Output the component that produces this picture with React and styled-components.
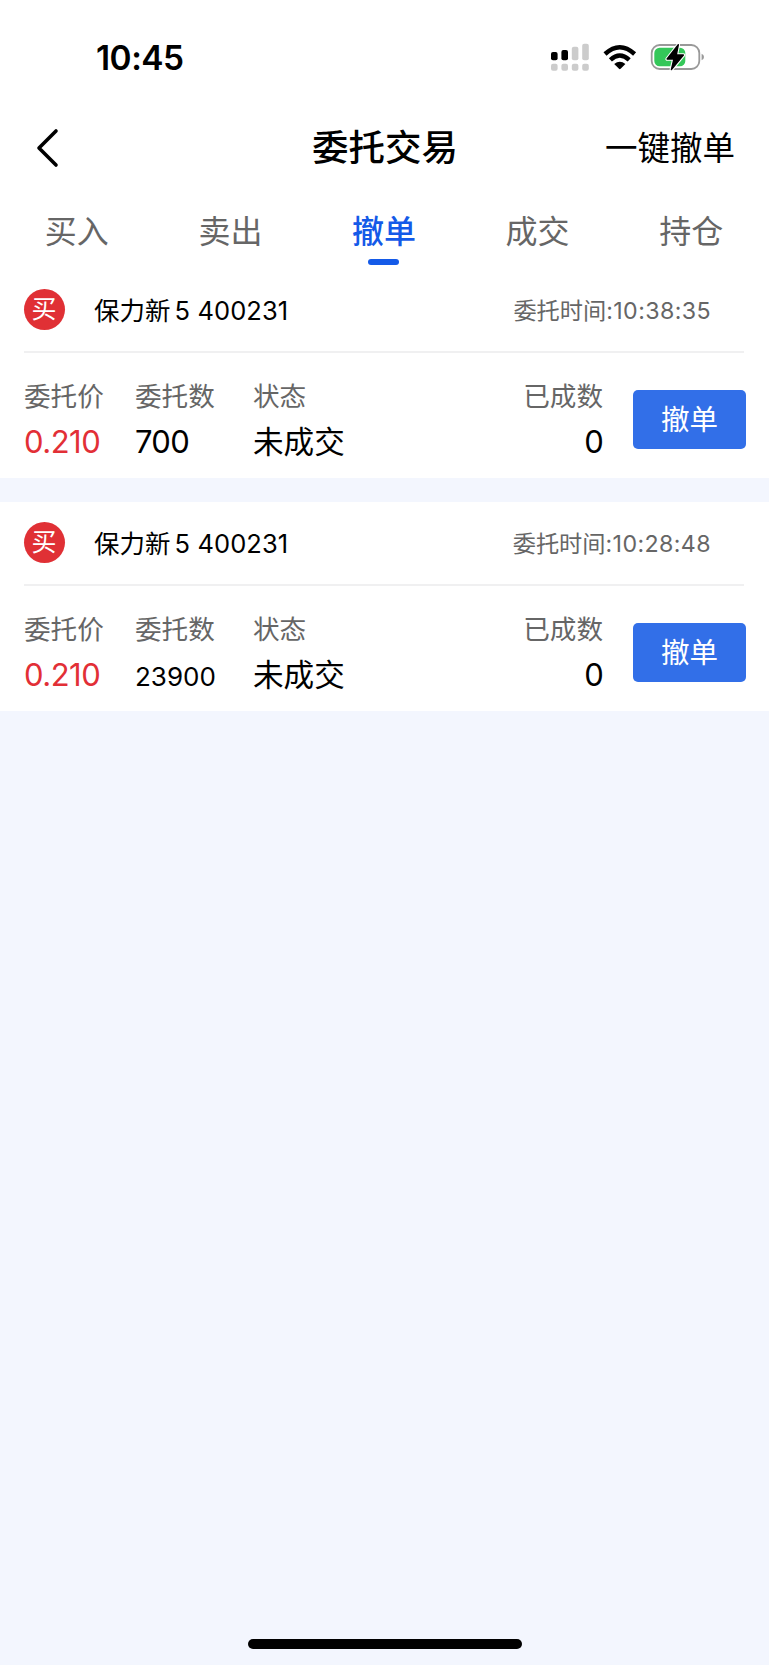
import React from 'react';
import styled, { createGlobalStyle } from 'styled-components';

const GlobalStyle = createGlobalStyle`
  * { box-sizing: border-box; }
  body { margin: 0; background: #f3f6fe; }
`;

const Screen = styled.div`
  width: 769px;
  height: 1665px;
  display: flex;
  flex-direction: column;
  background: #f3f6fe;
  color: #000;
  font-family: Inter, 'Noto Sans CJK SC', sans-serif;
  white-space: nowrap;
`;

const StatusBar = styled.div`
  height: 114px;
  flex: none;
  display: flex;
  align-items: center;
  justify-content: space-between;
  padding: 0 64px 0 96px;
  background: #fff;
`;

const Clock = styled.div`
  padding-top: 2px;
  font-size: 33.4px;
  line-height: 40px;
  font-weight: 600;
  letter-spacing: -0.5px;
`;

const StatusIcons = styled.svg`
  display: block;
  width: 160px;
  height: 40px;
`;

const Header = styled.header`
  height: 68px;
  flex: none;
  display: grid;
  grid-template-columns: 1fr auto 1fr;
  align-items: center;
  padding: 0 34px 0 36px;
  background: #fff;
`;

const BackButton = styled.button`
  width: 24px;
  height: 40px;
  padding: 0;
  border: 0;
  background: none;
  svg { display: block; }
`;

const Title = styled.h1`
  margin: 0 1px 0 0;
  font-size: 36.5px;
  line-height: 44px;
  font-weight: 500;
`;

const HeaderAction = styled.button`
  justify-self: end;
  padding: 2px 0 0;
  border: 0;
  background: none;
  color: #000;
  font: inherit;
  font-size: 32.5px;
  line-height: 44px;
`;

const Tabs = styled.nav`
  height: 90px;
  flex: none;
  display: flex;
  padding-right: 1px;
  background: #fff;
`;

const Tab = styled.div`
  flex: 1;
  display: flex;
  flex-direction: column;
  align-items: center;
  padding-top: 28px;
  font-size: 32px;
  line-height: 44px;
  color: ${(p) => (p.$active ? '#145ae8' : '#666')};
  font-weight: ${(p) => (p.$active ? 500 : 400)};
  &::after {
    content: '';
    width: 31px;
    height: 6px;
    margin-top: 5px;
    border-radius: 3px;
    background: ${(p) => (p.$active ? '#145ae8' : 'transparent')};
  }
`;

const Orders = styled.main`
  display: flex;
  flex-direction: column;
  gap: 24px;
`;

const Order = styled.section`
  height: ${(p) => p.$height}px;
  display: flex;
  flex-direction: column;
  justify-content: flex-end;
  padding: 0 23px 0 24px;
  background: #fff;
`;

const OrderHead = styled.div`
  height: 80px;
  flex: none;
  display: flex;
  align-items: center;
  padding-right: 33px;
  margin-right: 2px;
  border-bottom: 2px solid #f0f0f1;
`;

const Side = styled.div`
  width: 41px;
  height: 41px;
  margin: 0 29px 5px -0.5px;
  border-radius: 50%;
  background: #e03035;
  color: #fff;
  font-size: 25px;
  line-height: 41px;
  text-align: center;
`;

const Stock = styled.div`
  display: flex;
  align-items: baseline;
  gap: 4px;
  margin-bottom: 2px;
  padding-left: 0.5px;
  font-size: 25.5px;
  line-height: 36px;
`;

const Digits = styled.span`
  letter-spacing: ${(p) => p.$spacing || 0}px;
  font-size: ${(p) => p.$size}px;
`;

const OrderTime = styled.div`
  margin: 0 0 2px auto;
  font-size: 23.2px;
  line-height: 36px;
  color: #666;
`;

const OrderBody = styled.div`
  height: 125px;
  flex: none;
  display: grid;
  grid-template-columns: 111px 118px 1fr auto 113px;
  padding-top: 25px;
`;

const Field = styled.div`
  display: flex;
  flex-direction: column;
  align-items: ${(p) => (p.$end ? 'flex-end' : 'flex-start')};
  margin-right: ${(p) => (p.$end ? 30 : 0)}px;
`;

const Label = styled.div`
  font-size: 26.6px;
  line-height: 36px;
  color: #666;
`;

const Value = styled.div`
  margin-top: 5px;
  font-size: ${(p) => p.$size || 31}px;
  line-height: 46px;
  letter-spacing: ${(p) => p.$spacing || 0}px;
  color: ${(p) => (p.$rise ? '#e22f36' : '#000')};
`;

const CancelButton = styled.button`
  width: 113px;
  height: 59px;
  margin-top: 12px;
  padding: 0;
  border: 0;
  border-radius: 5px;
  background: #326fe8;
  color: #fff;
  font: inherit;
  font-size: 28.5px;
  line-height: 60px;
`;

const HomeIndicator = styled.div`
  width: 274px;
  height: 10px;
  margin: auto auto 16px;
  border-radius: 5px;
  background: #000;
`;

const orders = [
  { time: '10:38:35', amount: '700', height: 206 },
  { time: '10:28:48', amount: '23900', height: 209 },
];

function Indicators() {
  return (
    <StatusIcons viewBox="545 37 160 40">
      <g fill="#ccc">
        <rect x="571.8" y="46.7" width="6.6" height="13.6" rx="2" />
        <rect x="582.2" y="43.7" width="6.6" height="16.6" rx="2" />
        <rect x="551" y="63.8" width="6.6" height="7" rx="2" />
        <rect x="561.4" y="63.8" width="6.6" height="7" rx="2" />
        <rect x="571.8" y="63.8" width="6.6" height="7" rx="2" />
        <rect x="582.2" y="63.8" width="6.6" height="7" rx="2" />
      </g>
      <rect x="551" y="52" width="6.6" height="8.3" rx="2" />
      <rect x="561.4" y="50" width="6.6" height="10.3" rx="2" />
      <g fill="none" stroke="#000" strokeWidth="4.5">
        <path d="M605 54 Q619.8 40.5 634.6 54" />
        <path d="M610.4 59.8 Q619.8 51.2 629.2 59.8" />
      </g>
      <path d="M614.2 63.9 Q619.8 59.8 625.4 63.9 L620.6 68.8 Q619.8 69.5 619 68.8Z" />
      <rect x="651.7" y="45" width="47.6" height="24" rx="8" fill="#fff" stroke="#999" strokeWidth="1.8" />
      <path d="M701.6 53.7 Q704 54.5 704 57 Q704 59.5 701.6 60.3Z" fill="#999" />
      <rect x="654.3" y="47.8" width="31" height="18.4" rx="5.3" fill="#34c759" />
      <path d="M678.3 44.8 L667.1 59 H673.9 L671.4 69.6 L683.4 55 H676.3Z" fill="#fff" stroke="#fff" strokeWidth="3.6" strokeLinejoin="round" />
      <path d="M678.3 44.8 L667.1 59 H673.9 L671.4 69.6 L683.4 55 H676.3Z" strokeLinejoin="round" stroke="#000" strokeWidth="1.4" />
    </StatusIcons>
  );
}

function OrderCard({ time, amount, height }) {
  return (
    <Order $height={height}>
      <OrderHead>
        <Side>买</Side>
        <Stock>
          <span>保力新</span>
          <Digits $size={25.5} $spacing={0.1}>5 400231</Digits>
        </Stock>
        <OrderTime>委托时间<Digits $size={23.2} $spacing={0.4}>:{time}</Digits></OrderTime>
      </OrderHead>
      <OrderBody>
        <Field><Label>委托价</Label><Value $rise $spacing={-0.5}>0.210</Value></Field>
        <Field>
          <Label>委托数</Label>
          <Value $spacing={-0.7}>
            {amount.length > 4 ? <Digits $size={26}>{amount}</Digits> : amount}
          </Value>
        </Field>
        <Field><Label>状态</Label><Value $size={30.6}>未成交</Value></Field>
        <Field $end><Label>已成数</Label><Value $spacing={-0.7}>0</Value></Field>
        <CancelButton>撤单</CancelButton>
      </OrderBody>
    </Order>
  );
}

export default function App() {
  return (
    <>
      <GlobalStyle />
      <Screen>
        <StatusBar>
          <Clock>10:45</Clock>
          <Indicators />
        </StatusBar>
        <Header>
          <BackButton aria-label="返回">
            <svg width="24" height="40" viewBox="0 0 24 40" fill="none" stroke="#000" strokeWidth="3.6" strokeLinecap="round" strokeLinejoin="round">
              <path d="M20 3 L3 20 L20 37" />
            </svg>
          </BackButton>
          <Title>委托交易</Title>
          <HeaderAction>一键撤单</HeaderAction>
        </Header>
        <Tabs>
          {['买入', '卖出', '撤单', '成交', '持仓'].map((t) => (
            <Tab key={t} $active={t === '撤单'}>{t}</Tab>
          ))}
        </Tabs>
        <Orders>
          {orders.map((o) => <OrderCard key={o.time} {...o} />)}
        </Orders>
        <HomeIndicator />
      </Screen>
    </>
  );
}
